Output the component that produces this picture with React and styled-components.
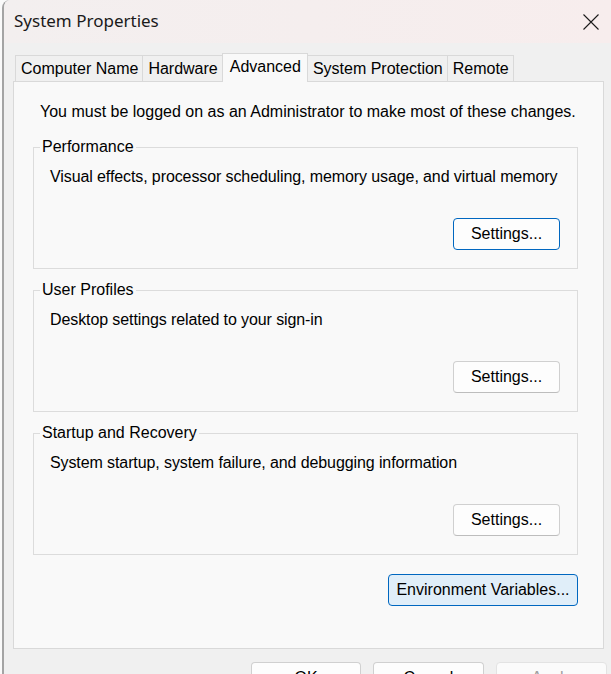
import React from 'react';
import styled, { createGlobalStyle } from 'styled-components';

const Global = createGlobalStyle`
  html, body {
    margin: 0;
    padding: 0;
    background: #fafafa;
  }
  body {
    font-family: "Liberation Sans", Arial, sans-serif;
    color: #000;
  }
  #root {
    width: 611px;
    height: 674px;
    overflow: hidden;
  }
`;

const Window = styled.div`
  margin-left: 2px;
  width: 609px;
  height: 674px;
  box-sizing: border-box;
  border-left: 2px solid #a4a4a4;
  border-top-left-radius: 8px;
  background: #f0f0f0;
  overflow: hidden;
  display: flex;
  flex-direction: column;
`;

const TitleBar = styled.div`
  height: 43px;
  flex: none;
  display: flex;
  align-items: center;
  justify-content: space-between;
  padding: 0 12px 0 10px;
  background: linear-gradient(to right, #f3efef, #f7eded);
`;

const Title = styled.span`
  font-family: "Noto Sans", "Open Sans", sans-serif;
  font-size: 17px;
  color: #1a1a1a;
  margin-top: -2px;
`;

const CloseGlyph = styled.svg`
  width: 16px;
  height: 16px;
  display: block;
`;

const Body = styled.div`
  display: flex;
  flex-direction: column;
  padding-left: 9px;
`;

const TabRow = styled.div`
  margin-top: 10px;
  height: 29px;
  margin-bottom: -1px;
  margin-right: 7px;
  padding-left: 2px;
  display: flex;
  align-items: flex-end;
  position: relative;
  z-index: 1;
`;

const Tab = styled.div`
  box-sizing: border-box;
  height: ${(p) => (p.$active ? '29px' : '26px')};
  margin-bottom: ${(p) => (p.$active ? '0' : '1px')};
  padding: ${(p) => (p.$active ? '0 6px 3px 7px' : '0 4px 0 5px')};
  display: flex;
  align-items: center;
  font-size: 16px;
  white-space: nowrap;
  background: ${(p) => (p.$active ? '#f9f9f9' : '#f0f0f0')};
  border: 1px solid #d9d9d9;
  border-bottom: none;
  border-right: ${(p) => (p.$active || p.$last ? '1px solid #d9d9d9' : 'none')};
  border-left: ${(p) => (p.$afterActive ? 'none' : '1px solid #d9d9d9')};
`;

const Panel = styled.div`
  height: 568px;
  box-sizing: border-box;
  margin-right: 7px;
  background: #f9f9f9;
  border: 1px solid #d9d9d9;
  display: flex;
  flex-direction: column;
`;

const Intro = styled.p`
  margin: 20px 0 0 26px;
  font-size: 16px;
  line-height: 20px;
`;

const Stack = styled.div`
  margin: 16px 25px 0 19px;
  display: flex;
  flex-direction: column;
  gap: 12px;
`;

const Group = styled.fieldset`
  margin: 0;
  min-width: 0;
  padding: 0 17px 18px 6px;
  border: 1px solid #dcdcdc;
  display: flex;
  flex-direction: column;
`;

const Legend = styled.legend`
  padding: 0 2px;
  margin: 0;
  font-size: 16px;
  line-height: 18px;
`;

const Desc = styled.div`
  margin: 11px 0 0 10px;
  font-size: 16px;
  line-height: 20px;
  white-space: nowrap;
  letter-spacing: -0.1px;
`;

const ButtonRow = styled.div`
  margin-top: 31px;
  display: flex;
  justify-content: flex-end;
`;

const Button = styled.button`
  box-sizing: border-box;
  width: ${(p) => p.$width || 107}px;
  height: 32px;
  padding: 0;
  border-radius: 4px;
  font-family: "Liberation Sans", Arial, sans-serif;
  font-size: 16px;
  color: ${(p) => (p.$disabled ? '#a0a0a0' : '#000')};
  background: ${(p) => (p.$default ? '#e0eef9' : p.$disabled ? '#fbfbfb' : '#fdfdfd')};
  border: 1px solid
    ${(p) => (p.$default || p.$focused ? '#0067c0' : p.$disabled ? '#e3e3e3' : '#d0d0d0')};
  border-bottom-color: ${(p) =>
    p.$default || p.$focused ? '#0067c0' : p.$disabled ? '#e3e3e3' : '#bdbdbd'};
`;

const EnvButton = styled(Button)`
  align-self: flex-end;
  margin: 7px 0 0 0;
`;

const Footer = styled.div`
  margin-top: 13px;
  padding-right: 4px;
  display: flex;
  justify-content: flex-end;
  gap: 12px;
`;

const tabs = ['Computer Name', 'Hardware', 'Advanced', 'System Protection', 'Remote'];
const activeTab = 2;

const groups = [
  {
    title: 'Performance',
    text: 'Visual effects, processor scheduling, memory usage, and virtual memory',
    focused: true,
  },
  { title: 'User Profiles', text: 'Desktop settings related to your sign-in' },
  {
    title: 'Startup and Recovery',
    text: 'System startup, system failure, and debugging information',
  },
];

export default function App() {
  return (
    <>
      <Global />
      <Window>
        <TitleBar>
          <Title>System Properties</Title>
          <CloseGlyph viewBox="0 0 16 16">
            <path d="M0.5 0.5 L15.5 15.5 M15.5 0.5 L0.5 15.5" stroke="#1a1a1a" strokeWidth="1.1" fill="none" />
          </CloseGlyph>
        </TitleBar>
        <Body>
          <TabRow>
            {tabs.map((t, i) => (
              <Tab
                key={t}
                $active={i === activeTab}
                $afterActive={i === activeTab + 1}
                $last={i === tabs.length - 1}
              >
                {t}
              </Tab>
            ))}
          </TabRow>
          <Panel>
            <Intro>You must be logged on as an Administrator to make most of these changes.</Intro>
            <Stack>
              {groups.map((g) => (
                <Group key={g.title}>
                  <Legend>{g.title}</Legend>
                  <Desc>{g.text}</Desc>
                  <ButtonRow>
                    <Button $focused={g.focused}>Settings...</Button>
                  </ButtonRow>
                </Group>
              ))}
              <EnvButton $default $width={190}>Environment Variables...</EnvButton>
            </Stack>
          </Panel>
          <Footer>
            <Button $width={110}>OK</Button>
            <Button $width={111}>Cancel</Button>
            <Button $width={111} $disabled>Apply</Button>
          </Footer>
        </Body>
      </Window>
    </>
  );
}
